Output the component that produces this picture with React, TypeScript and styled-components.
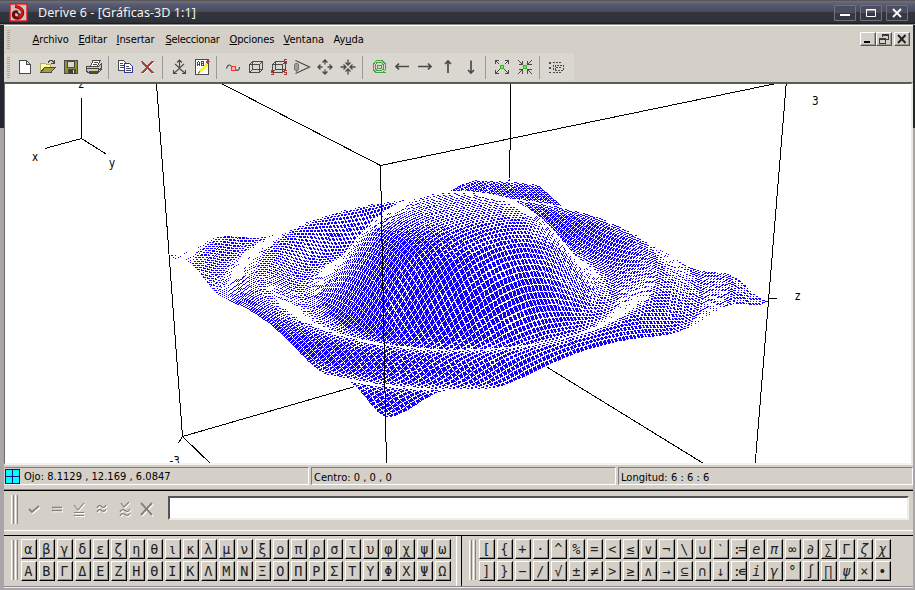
import React from "react";
import styled, { createGlobalStyle, css } from "styled-components";

const FACE = "#d4d0c8";
const UI = `"DejaVu Sans Condensed", "DejaVu Sans", sans-serif`;

const GlobalStyle = createGlobalStyle`
  html, body { margin: 0; padding: 0; overflow: hidden; background: #3a3d46; }
  * { box-sizing: border-box; }
`;

const Frame = styled.div`
  width: 915px;
  height: 590px;
  display: flex;
  flex-direction: column;
  overflow: hidden;
  font-family: ${UI};
  font-size: 11px;
  color: #000;
  background: linear-gradient(#24272e 0 128px, #a9a5a9 128px);
`;

const TitleBar = styled.header`
  flex: 0 0 25px;
  display: flex;
  align-items: center;
  padding: 0 7px 0 9px;
  border-top: 1px solid #5a5654;
  border-bottom: 1px solid #8f8b8b;
  background: linear-gradient(#6a6d85 0, #56596f 4px, #494c5e 11px, #32353d 11px, #2f323a 21px, #16171c 23px);
`;

const Title = styled.h1`
  margin: 0 auto 0 10px;
  font: 400 12.6px/22px "Noto Sans", sans-serif;
  letter-spacing: 0.03px;
  white-space: pre;
  color: #f2f2f2;
`;

const CaptionButton = styled.span`
  width: 22px;
  height: 16px;
  margin-left: 4px;
  border: 1px solid #6f727c;
  border-radius: 1px;
  display: flex;
  align-items: center;
  justify-content: center;
  background: linear-gradient(#4c4f5f 50%, #363941 50%);
`;

const Body = styled.main`
  flex: 1;
  margin: 0 2px 0 4px;
  border-top: 1px solid #fff;
  display: flex;
  flex-direction: column;
  background: ${FACE};
  min-height: 0;
`;

const MenuBar = styled.nav`
  flex: 0 0 27px;
  display: flex;
  align-items: center;
  padding: 0 3px 0 3px;
`;

const Grip = styled.i<{ $h: number }>`
  width: 3px;
  height: ${(p) => p.$h}px;
  background: repeating-linear-gradient(#a9a69f 0 1px, transparent 1px 2px);
`;

const MenuItem = styled.span<{ $w: number; $ls?: number }>`
  width: ${(p) => p.$w}px;
  font-size: 11px;
  letter-spacing: ${(p) => p.$ls ?? 0}px;
  white-space: nowrap;
  u { text-underline-offset: 1px; text-decoration-thickness: 1px; }
`;

const MenuList = styled.div`
  display: flex;
  margin: 0 auto 0 22.5px;
`;

const MdiButton = styled.span<{ $gap?: boolean }>`
  width: 16px;
  height: 14px;
  margin-left: ${(p) => (p.$gap ? 2 : 0)}px;
  margin-top: -2px;
  border: 1px solid;
  border-color: #fff #55534f #55534f #fff;
  box-shadow: inset -1px -1px #a19d96;
  display: flex;
  align-items: center;
  justify-content: center;
`;

const ToolBar = styled.div`
  flex: 0 0 28px;
  width: 570px;
  margin-bottom: 1px;
  display: flex;
  align-items: center;
  padding-left: 3px;
  border-radius: 2px;
  background: #dad7d0;
`;

const Tool = styled.svg`
  width: 16px;
  height: 16px;
  margin-right: 7px;
  overflow: visible;
  fill: none;
  stroke: #4a4a48;
  shape-rendering: crispEdges;
`;

const ToolLead = styled.i`
  width: 7px;
`;

const ToolGap = styled.i`
  width: 1px;
  height: 23px;
  margin: 0 8px 0 -1px;
  background: #9c9a98;
`;

const Viewport = styled.section`
  flex: 0 0 383px;
  border: 1px solid;
  border-width: 2px 2px 2px 1px;
  border-color: #5d5b58 #ece9e3 #f4f2ee #6d6b68;
  background: #fff;
  display: flex;
`;

const Plot = styled.svg`
  width: 906px;
  height: 379px;
  shape-rendering: crispEdges;
  font: 11.5px ${UI};
`;

const StatusBar = styled.div`
  flex: 0 0 25px;
  display: flex;
  gap: 2px;
  padding: 2px 0 4px;
  border-bottom: 1px solid #8a867e;
`;

const Pane = styled.div<{ $w?: number; $first?: boolean }>`
  ${(p) => (p.$w ? css`flex: 0 0 ${p.$w}px;` : css`flex: 1;`)}
  display: flex;
  align-items: center;
  padding: ${(p) => (p.$first ? "0" : "3px 0 0 2px")};
  border: 1px solid;
  border-color: #807d78 #fff #fff ${(p) => (p.$first ? FACE : "#807d78")};
  font-size: 11px;
  letter-spacing: 0.03px;
  white-space: pre;
  gap: 4px;
`;

const EntryBar = styled.div`
  flex: 0 0 41px;
  display: flex;
  align-items: center;
  padding: 0 4px 3px 7px;
  border-top: 1px solid #000;
  border-bottom: 1px solid #fff;
`;

const DoubleGrip = styled.i<{ $h: number }>`
  width: 7px;
  height: ${(p) => p.$h}px;
  flex: none;
  background: linear-gradient(90deg, #fff 0 1px, #d4d0c8 1px 2px, #85827c 2px 3px, #d4d0c8 3px 4px, #fff 4px 5px, #d4d0c8 5px 6px, #85827c 6px);
`;

const EntryIcons = styled.div`
  display: flex;
  margin: 0 13px 0 8px;
  gap: 6.7px;
`;

const EntryIcon = styled.svg`
  width: 16px;
  height: 16px;
  fill: none;
  stroke: #85827c;
  stroke-width: 1.3;
  filter: drop-shadow(1px 1px 0 #fff);
`;

const Entry = styled.div`
  flex: 1;
  height: 24px;
  margin-top: -3px;
  border: 2px solid;
  border-color: #57525a #f1eee8 #f1eee8 #57525a;
  background: #fff;
`;

const Keys = styled.div`
  flex: 0 0 51px;
  margin-top: 4px;
  display: flex;
  border-top: 1px solid #000;
`;

const KeyPanel = styled.div<{ $w?: number }>`
  ${(p) => (p.$w ? css`width: ${p.$w}px; border-right: 1px solid #000; box-shadow: inset -4px 0 ${FACE}, inset -5px 0 #fff;` : css`flex: 1;`)}
  display: flex;
  align-items: center;
  padding: 0 0 2px 7px;
`;

const KeyGrid = styled.div<{ $n: number }>`
  display: grid;
  grid-template-columns: repeat(${(p) => p.$n}, 16px);
  grid-auto-rows: 20px;
  column-gap: 2px;
  row-gap: 2px;
  margin-left: 3px;
`;

const Key = styled.span<{ $italic?: boolean }>`
  display: flex;
  align-items: center;
  justify-content: center;
  padding-right: 2px;
  border: 1px solid;
  border-color: #fff #000 #000 #fff;
  box-shadow: inset -1px -1px #8f8b84;
  font: ${(p) => (p.$italic ? "italic" : "normal")} 13.5px/16px "DejaVu Sans Mono", "DejaVu Sans", sans-serif;
  color: #222;
  overflow: hidden;
  white-space: nowrap;
  letter-spacing: -0.5px;
`;

const WideKey = styled(Key)`
  letter-spacing: -3px;
`;

const Bottom = styled.footer`
  flex: 1;
  border-top: 1px solid #8a868c;
  background: linear-gradient(#efecf0 0 1px, #a9a5a9 1px);
`;

/* ---------- surface z = sin(x²+y²) / (x²+y²) in a perspective view ---------- */

const EYE = [8.1129, 12.169, 6.0847];
const EYE_LEN = Math.hypot(EYE[0], EYE[1], EYE[2]);
const W = EYE.map((v) => v / EYE_LEN);
const H = Math.hypot(W[0], W[1]);
const R = [-W[1] / H, W[0] / H];
const U = [-W[0] * W[2] / H, -W[1] * W[2] / H, H];

type Point = [number, number];

function project(x: number, y: number, z: number): Point {
  const depth = 21.7 - (W[0] * x + W[1] * y + W[2] * z);
  const k = 1565 / depth;
  return [
    Math.round(453.3 + k * (R[0] * x + R[1] * y)),
    Math.round(189.8 - k * (U[0] * x + U[1] * y + U[2] * z)),
  ];
}

const N = 100;
const WIDTH = 906;
const HEIGHT = 379;
const MESH = 1;
const FILL = 2;

/* Scan-converts the panels back to front, then packs each scanline into runs. */
function buildSurface() {
  const buf = new Uint8Array(WIDTH * HEIGHT);

  const line = ([x0, y0]: Point, [x1, y1]: Point) => {
    const dx = Math.abs(x1 - x0);
    const dy = -Math.abs(y1 - y0);
    const sx = x0 < x1 ? 1 : -1;
    const sy = y0 < y1 ? 1 : -1;
    let err = dx + dy;
    let x = x0;
    let y = y0;
    for (;;) {
      buf[y * WIDTH + x] = MESH;
      if (x === x1 && y === y1) return;
      const e2 = 2 * err;
      if (e2 >= dy) { err += dy; x += sx; }
      if (e2 <= dx) { err += dx; y += sy; }
    }
  };

  const fill = (ring: Point[]) => {
    const ys = ring.map((p) => p[1]);
    for (let y = Math.min(...ys); y <= Math.max(...ys); y++) {
      let lo = Infinity;
      let hi = -Infinity;
      ring.forEach((a, i) => {
        const b = ring[(i + 1) % ring.length];
        if ((y < a[1] && y < b[1]) || (y > a[1] && y > b[1])) return;
        const xs = a[1] === b[1] ? [a[0], b[0]] : [a[0] + ((y - a[1]) * (b[0] - a[0])) / (b[1] - a[1])];
        lo = Math.min(lo, ...xs);
        hi = Math.max(hi, ...xs);
      });
      for (let x = Math.ceil(lo); x <= hi; x++) buf[y * WIDTH + x] = FILL;
    }
  };

  const pts: Point[][] = [];
  for (let i = 0; i <= N; i++) {
    const row: Point[] = [];
    for (let j = 0; j <= N; j++) {
      const x = -3 + (6 * i) / N;
      const y = -3 + (6 * j) / N;
      const q = x * x + y * y;
      row.push(project(x, y, q < 1e-6 ? 1 : Math.sin(q) / q));
    }
    pts.push(row);
  }
  for (let i = 0; i < N; i++)
    for (let j = 0; j < N; j++) {
      const ring = [pts[i][j], pts[i + 1][j], pts[i + 1][j + 1], pts[i][j + 1]];
      fill(ring);
      ring.forEach((p, k) => line(p, ring[(k + 1) % 4]));
    }

  const runs = (value: number) => {
    let d = "";
    for (let y = 0; y < HEIGHT; y++)
      for (let x = 0; x < WIDTH; x++) {
        if (buf[y * WIDTH + x] !== value) continue;
        const start = x;
        while (x < WIDTH && buf[y * WIDTH + x] === value) x++;
        d += `M${start} ${y}.5h${x - start}`;
      }
    return d;
  };
  return { mesh: runs(MESH), panels: runs(FILL) };
}

const SURFACE = buildSurface();

function Scene() {
  return (
    <Plot viewBox="5 84 906 379">
      <g stroke="#000" fill="none">
        <path d="M510.5 60V120L509.500 181V330" />
        <path d="M182.500 436.500L507 342.500L706 465" />
        <path d="M155 70L156.500 84L182.500 436.500L213 466M182.500 436.500L178.500 443" />
      </g>
      <g transform="translate(5 84)" fill="none">
        <path d={SURFACE.mesh} stroke="#fff" />
        <path d={SURFACE.panels} stroke="#1400ff" />
      </g>
      <g stroke="#000" fill="none">
        <path d="M203 74L380.500 165.500L822 74M380.500 165.500L386.500 466" />
        <path d="M787 74L755 466M768.500 298.500H777" />
        <path d="M81.500 98V138.500L45 148.500M81.500 138.500L106 154" />
      </g>
      <g fill="#000">
        <text x="78.500" y="88">z</text>
        <text x="32" y="161">x</text>
        <text x="109" y="167">y</text>
        <text x="812" y="105">3</text>
        <text x="795" y="300">z</text>
        <text x="169.500" y="465">-3</text>
      </g>
    </Plot>
  );
}

/* ---------- toolbar drawings ---------- */

const Arrows = ({ inward }: { inward?: boolean }) => (
  <g strokeWidth="1.3" shapeRendering="auto">
    {[0, 90, 180, 270].map((a) => (
      <path key={a} transform={`rotate(${a} 8 8)`} d={inward ? "M8 .5V6M5.500 3.500L8 6L10.500 3.500" : "M8 1V5.500M5.500 3.500L8 1L10.500 3.500"} />
    ))}
  </g>
);

const Diagonals = ({ inward }: { inward?: boolean }) => (
  <g>
    {[0, 90, 180, 270].map((a) => (
      <path key={a} transform={`rotate(${a} 8 8)`} d={inward ? "M1 1L5 5M5.500 1.500V5.500H1.500" : "M1 1L5.500 5.500M1.500 5V1.500H5"} />
    ))}
    <circle cx="8" cy="8" r="2" fill="#5bff3c" stroke="#35b52c" />
  </g>
);

const Cube = () => (
  <path d="M1.500 5.500H11.500V13.500H1.500ZM4.500 2.500H14.500V10.500H4.500ZM1.500 5.500L4.500 2.500M11.500 5.500L14.500 2.500M11.500 13.500L14.500 10.500M1.500 13.500L4.500 10.500" />
);

const groups: React.ReactNode[][] = [
  [
    <path d="M2.500 1.500H9.500L13.500 5.500V14.500H2.500ZM9.500 1.500V5.500H13.500" fill="#fff" />,
    <>
      <path d="M.5 13.500V4.500H5L6.500 5.500H10.500V8" fill="#fffdb0" stroke="#b8b060" />
      <path d="M.5 13.500L4.500 8.500H15L11 13.500Z" fill="#a0a03c" />
      <path d="M8 3.500L10 1.500H12L14 3.500M14.500 1V4.500H11" />
    </>,
    <>
      <path d="M1.500 1.500H14.500V14.500H1.500Z" fill="#8f8f35" />
      <path d="M4.500 2H11.500V8H4.500Z" fill="#dad7d0" />
      <path d="M5 10H12V14H5Z" fill="#3c3c3c" />
      <path d="M10.500 11V14" stroke="#ddd" />
    </>,
    <>
      <path d="M4.500 7L7 1.500H14L11.500 7" fill="#fff" />
      <path d="M7.500 3.500H12M6.500 5.500H11" />
      <path d="M.5 7.500H12.500L15.500 4.500V10L12.500 13.500H2L.5 12Z" fill="#c8c6c0" />
      <path d="M.5 9.500H12.500V13M3 12.500H12L15 9M3 14.500H12" />
      <path d="M7 11.500H10" stroke="#e8e000" />
    </>,
  ],
  [
    <>
      <path d="M1.500 1.500H6.500L9.500 4.500V11.500H1.500Z" fill="#fff" />
      <path d="M3 4.500H6M3 6.500H7M3 8.500H7" />
      <path d="M7.500 4.500H12.500L15.500 7.500V13.500H7.500Z" fill="#fff" stroke="#3434a0" />
      <path d="M9 7.500H12M9 9.500H14M9 11.500H14" />
    </>,
    <>
      <path d="M2 3L14 15M14 3L3 15" stroke="#fff" />
      <path d="M1.500 2L13 14M13 2L2 14" stroke="#a04646" strokeWidth="2" />
    </>,
  ],
  [
    <path shapeRendering="auto" strokeWidth="1.100" d="M8.500 1V9.500L2.500 14.500M8.500 9.500L14.500 14.500M6 3.500L8.500 1L11 3.500M2.500 11V14.500H6M14.500 11V14.500H11M4 5L8.500 9L13 5" />,
    <>
      <path d="M1.500 .5H14.500V15.500H1.500Z" fill="#fff" />
      <path d="M3.500 7V3.500L4.500 2.500L5.500 3.500V7M3.500 5.500H5.500M7.500 7V2.500H9.500V4.500H7.500M9.500 4.500V6.500H7.500" />
      <path d="M6 13L13 5" stroke="#fff020" strokeWidth="3" />
      <path d="M12.500 3.500L15 1.500" stroke="#a04646" strokeWidth="3" />
      <path d="M4 14.500L6 12.500" strokeWidth="1.600" stroke="#888" />
    </>,
  ],
  [
    <>
      <path shapeRendering="auto" strokeWidth="1.200" d="M1.500 9.500C3 5 5.500 5 7 8.500M11 10.500C12.500 12.500 14.500 11 14.500 8" />
      <path d="M6.500 7.500H10.500V11.500H6.500Z" fill="#ffb0a0" stroke="#ff3030" />
    </>,
    <Cube />,
    <>
      <Cube />
      <path stroke="#a83838" d="M15.500 .5H13.500V2.500H15.500V4.500H13M3 11.500H.5V13.500H2.500V15.500H0M15.500 11.500H13.500V13.500H15.500V15.500H13" />
    </>,
    <>
      <path shapeRendering="auto" strokeWidth="1.200" d="M1.500 1.500L15.500 8L1.500 14.500" />
      <ellipse cx="2.500" cy="8" rx="2" ry="4" fill="#9b9a9c" stroke="#777" />
    </>,
    <Arrows />,
    <Arrows inward />,
  ],
  [
    <g stroke="#45a045">
      <path d="M5.500 1.500H11L14.500 5V10.500L12 13.500H5L2.500 11V5Z" />
      <path d="M6 3.500H10.500L12.500 6V10.500L10 11.500H6L4.500 10V6Z" />
      <path d="M6.500 6.500H10.500V9.500H6.500ZM9 13.500H15" />
    </g>,
    <path shapeRendering="auto" strokeWidth="1.700" d="M1.500 7.500H15M5 4.500L2 7.500L5 10.500" />,
    <path shapeRendering="auto" strokeWidth="1.700" d="M1 7.500H14.500M11 4.500L14 7.500L11 10.500" />,
    <path shapeRendering="auto" strokeWidth="1.700" d="M8 1.500V14M5 5L8 2L11 5" />,
    <path shapeRendering="auto" strokeWidth="1.700" d="M8 1.500V14M5 11L8 14L11 11" />,
  ],
  [<Diagonals />, <Diagonals inward />],
  [
    <g>
      <path strokeWidth="2" strokeDasharray="2 3" d="M2 3V14" />
      <path strokeDasharray="2 1" d="M5 3.500H14M5 13.500H14M5.500 6V11.500M15.500 6V11.500H7V6H15" />
      <path d="M8 8.500H13" strokeDasharray="2 1" />
    </g>,
  ],
];

const menu: [string, string, string, number, number][] = [
  ["", "A", "rchivo", 46, -0.1],
  ["", "E", "ditar", 38, -0.15],
  ["", "I", "nsertar", 49, -0.05],
  ["", "S", "eleccionar", 64, -0.3],
  ["", "O", "pciones", 54, -0.15],
  ["", "V", "entana", 50, 0],
  ["Ay", "u", "da", 40, -0.05],
];

const greek = [..."αβγδεζηθικλμνξοπρστυφχψωΑΒΓΔΕΖΗΘΙΚΛΜΝΞΟΠΡΣΤΥΦΧΨΩ"];
const maths = "[ { + · ^ % = < ≤ ∨ ¬ \\ ∪ ‵ := e π ∞ ∂ ∑ Γ ζ χ ] } − / √ ± ≠ > ≥ ∧ → ⊆ ∩ ↓ :∊ i γ ° ∫ ∏ ψ × •".split(" ");
const slanted = new Set([15, 16, 21, 22, 38, 39, 43]);

const entryIcons = [
  <path d="M3 8L6 11L13 5" strokeWidth="1.800" />,
  <path d="M3 6.500H13M3 9.500H13" />,
  <path d="M3 4L7 9L13 2M3 11.500H13M3 14.500H13" strokeWidth="1.100" />,
  <path d="M3 7Q5 3 7.500 5.500T12 4M3 11Q5 7 7.500 9.500T12 8" />,
  <path d="M4 2L7 6L12 1M3 11Q5 7 8 9.500T13 8M3 15Q5 11 8 13.500T13 12" strokeWidth="1.200" />,
  <path d="M2 2L13 14M13 2L2 14" strokeWidth="2" />,
];

export default function App() {
  return (
    <Frame>
      <GlobalStyle />
      <TitleBar>
        <svg width="19" height="19" viewBox="0 0 19 19">
          <rect x="1" y="1" width="17" height="17" fill="#c9c7c6" stroke="#f01010" strokeWidth="1.400" />
          <path d="M9 9C5 8 4 10 4.500 12.500C5.500 16 11 16 13 12C15 8 12 4 6 3.500" fill="none" stroke="#6c0c0c" strokeWidth="3.200" />
          <path d="M6 3.500C11 3.500 14 6.500 13 10.500C12.500 12.500 11.500 14 9.500 14.500" fill="none" stroke="#d81414" strokeWidth="2.200" />
          <path d="M8 10.500C10.500 9.500 11 12 9 12.500" fill="none" stroke="#6c0c0c" strokeWidth="1.400" />
        </svg>
        <Title>Derive 6 - [Gráficas-3D 1:1]</Title>
        <CaptionButton>
          <svg width="12" height="10"><path d="M1 7H11" stroke="#fff" strokeWidth="2" /></svg>
        </CaptionButton>
        <CaptionButton>
          <svg width="12" height="10"><path d="M1.500 1.500H10.500V8.500H1.500ZM1 2H11" stroke="#fff" fill="none" /></svg>
        </CaptionButton>
        <CaptionButton>
          <svg width="12" height="10"><path d="M2 1L10 9M10 1L2 9" stroke="#fff" strokeWidth="1.800" /></svg>
        </CaptionButton>
      </TitleBar>
      <Body>
        <MenuBar>
          <Grip $h={19} />
          <MenuList>
            {menu.map(([a, b, c, w, ls]) => (
              <MenuItem key={b + c} $w={w} $ls={ls}>{a}<u>{b}</u>{c}</MenuItem>
            ))}
          </MenuList>
          <MdiButton><svg width="12" height="10" shapeRendering="crispEdges"><path d="M2 8H8" stroke="#000" strokeWidth="2" /></svg></MdiButton>
          <MdiButton><svg width="12" height="10" shapeRendering="crispEdges"><path d="M4.500 3V.5H10.500V5.500H8M4 1.500H10M1.500 4.500H7.500V9.500H1.500ZM1 5.500H8" fill="none" stroke="#3c3a36" /></svg></MdiButton>
          <MdiButton $gap><svg width="12" height="10"><path d="M2 1L9.500 9M9.500 1L2 9" stroke="#222" strokeWidth="2" /></svg></MdiButton>
        </MenuBar>
        <ToolBar>
          <Grip $h={21} />
          <ToolLead />
          {groups.map((g, i) => (
            <React.Fragment key={i}>
              {i > 0 && <ToolGap />}
              {g.map((n, j) => <Tool key={j} viewBox="0 0 16 16">{n}</Tool>)}
            </React.Fragment>
          ))}
        </ToolBar>
        <Viewport><Scene /></Viewport>
        <StatusBar>
          <Pane $w={305} $first>
            <svg width="15" height="15" shapeRendering="crispEdges">
              <path d="M.5.5H14.500V14.500H.5ZM7.500 0V15M0 7.500H15" fill="#00ffff" stroke="#10107c" />
            </svg>
            Ojo: 8.1129 , 12.169 , 6.0847
          </Pane>
          <Pane $w={305}>Centro: 0 , 0 , 0</Pane>
          <Pane>Longitud: 6 : 6 : 6</Pane>
        </StatusBar>
        <EntryBar>
          <DoubleGrip $h={29} />
          <EntryIcons>
            {entryIcons.map((n, i) => <EntryIcon key={i} viewBox="0 0 16 16">{n}</EntryIcon>)}
          </EntryIcons>
          <Entry />
        </EntryBar>
        <Keys>
          <KeyPanel $w={458}>
            <DoubleGrip $h={40} />
            <KeyGrid $n={24}>{greek.map((k) => <Key key={k}>{k}</Key>)}</KeyGrid>
          </KeyPanel>
          <KeyPanel>
            <DoubleGrip $h={40} />
            <KeyGrid $n={23}>
              {maths.map((k, i) => k.length > 1
                ? <WideKey key={i}>{k}</WideKey>
                : <Key key={i} $italic={slanted.has(i)}>{k}</Key>)}
            </KeyGrid>
          </KeyPanel>
        </Keys>
        <Bottom />
      </Body>
    </Frame>
  );
}
